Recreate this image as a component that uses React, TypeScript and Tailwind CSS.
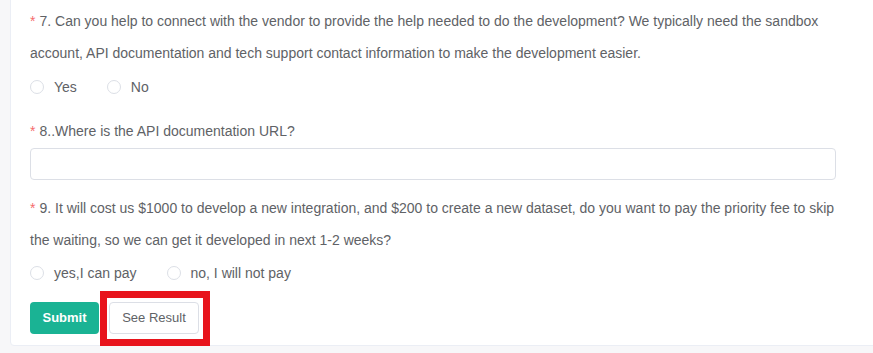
import React from "react";

const Req = () => <span className="text-[#f56c6c] mr-1">*</span>;

function Radio({ label }: { label: string }) {
  return (
    <label className="flex items-center mr-[30px] cursor-pointer">
      <span className="w-[14px] h-[14px] rounded-full border border-[#dcdfe6] bg-white" />
      <span className="pl-[10px] text-[14px]">{label}</span>
    </label>
  );
}

export default function App() {
  return (
    <div className="w-[873px] h-[353px] overflow-hidden bg-[#f7f7f9] text-[#606266] font-['Liberation_Sans',Arial,sans-serif]">
      <div className="relative ml-[10px] -mt-[10px] w-[880px] bg-white border border-[#ebeef5] rounded-[4px] pl-[19px] pt-[14px] pb-[11px]">
        {/* Question 7 */}
        <div className="text-[14px] leading-[32px] w-[810px]">
          <Req />7. Can you help to connect with the vendor to provide the help needed to do the development? We typically need the sandbox account, API documentation and tech support contact information to make the development easier.
        </div>
        <div className="flex items-center h-[36px] mb-[10px]">
          <Radio label="Yes" />
          <Radio label="No" />
        </div>

        {/* Question 8 */}
        <div className="text-[14px] leading-[32px]">
          <Req />8..Where is the API documentation URL?
        </div>
        <input
          type="text"
          className="block mt-px w-[806px] h-[32px] border border-[#dcdfe6] rounded-[4px] px-[15px] text-[14px] outline-none mb-[12px]"
        />

        {/* Question 9 */}
        <div className="text-[14px] leading-[32px] w-[810px]">
          <Req />9. It will cost us $1000 to develop a new integration, and $200 to create a new dataset, do you want to pay the priority fee to skip the waiting, so we can get it developed in next 1-2 weeks?
        </div>
        <div className="flex items-center h-[34px] mb-[12px]">
          <Radio label="yes,I can pay" />
          <Radio label="no, I will not pay" />
        </div>

        <div className="flex items-center gap-[10px]">
          <button className="w-[69px] h-[32px] rounded-[4px] bg-[#1ab394] text-white text-[13px] font-bold">
            Submit
          </button>
          <button className="w-[90px] h-[32px] rounded-[4px] bg-white border border-[#dcdfe6] text-[#606266] text-[13px]">
            See Result
          </button>
        </div>

        {/* annotation box */}
        <div className="absolute left-[89px] bottom-[-1px] w-[110px] h-[55px] border-[7px] border-[#e8141c]" />
      </div>
    </div>
  );
}
